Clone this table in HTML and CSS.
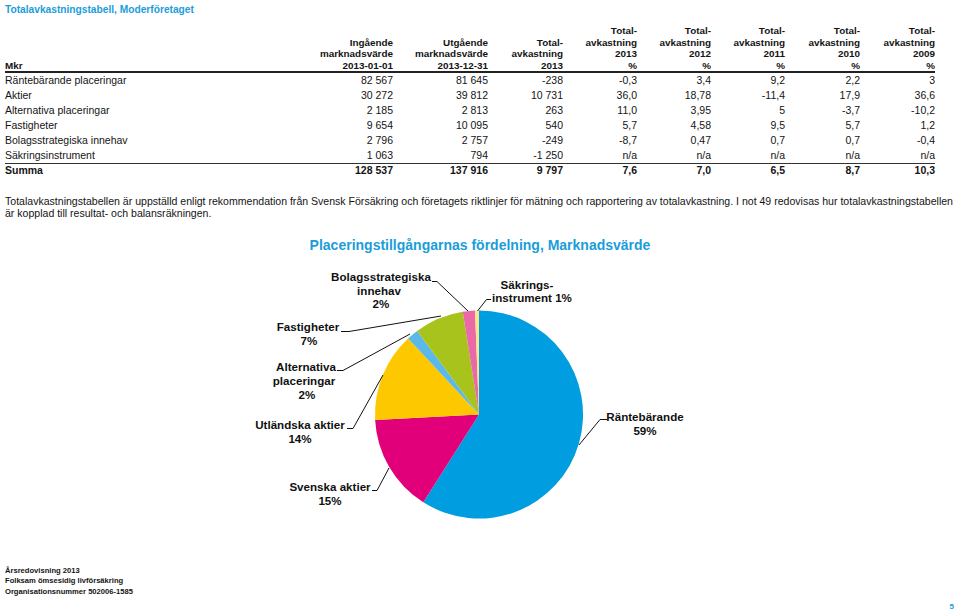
FILE: index.html
```html
<!DOCTYPE html>
<html lang="sv">
<head>
<meta charset="utf-8">
<title>Totalavkastningstabell, Moderföretaget</title>
<link rel="stylesheet" href="styles.css">
</head>
<body>
<div class="page">
  <h1 class="title">Totalavkastningstabell, Moderföretaget</h1>
  <table class="ret">
    <colgroup>
      <col class="c-lbl"><col class="c-in"><col class="c-ut"><col class="c-tot">
      <col class="c-pct"><col class="c-pct"><col class="c-pct"><col class="c-pct2"><col class="c-pct2">
    </colgroup>
    <thead>
      <tr>
        <th class="lbl">Mkr</th>
        <th>Ingående<br>marknadsvärde<br>2013-01-01</th>
        <th>Utgående<br>marknadsvärde<br>2013-12-31</th>
        <th>Total-<br>avkastning<br>2013</th>
        <th>Total-<br>avkastning<br>2013<br>%</th>
        <th>Total-<br>avkastning<br>2012<br>%</th>
        <th>Total-<br>avkastning<br>2011<br>%</th>
        <th>Total-<br>avkastning<br>2010<br>%</th>
        <th>Total-<br>avkastning<br>2009<br>%</th>
      </tr>
    </thead>
    <tbody>
      <tr><td class="lbl">Räntebärande placeringar</td><td>82 567</td><td>81 645</td><td>-238</td><td>-0,3</td><td>3,4</td><td>9,2</td><td>2,2</td><td>3</td></tr>
      <tr><td class="lbl">Aktier</td><td>30 272</td><td>39 812</td><td>10 731</td><td>36,0</td><td>18,78</td><td>-11,4</td><td>17,9</td><td>36,6</td></tr>
      <tr><td class="lbl">Alternativa placeringar</td><td>2 185</td><td>2 813</td><td>263</td><td>11,0</td><td>3,95</td><td>5</td><td>-3,7</td><td>-10,2</td></tr>
      <tr><td class="lbl">Fastigheter</td><td>9 654</td><td>10 095</td><td>540</td><td>5,7</td><td>4,58</td><td>9,5</td><td>5,7</td><td>1,2</td></tr>
      <tr><td class="lbl">Bolagsstrategiska innehav</td><td>2 796</td><td>2 757</td><td>-249</td><td>-8,7</td><td>0,47</td><td>0,7</td><td>0,7</td><td>-0,4</td></tr>
      <tr><td class="lbl">Säkringsinstrument</td><td>1 063</td><td>794</td><td>-1 250</td><td>n/a</td><td>n/a</td><td>n/a</td><td>n/a</td><td>n/a</td></tr>
    </tbody>
    <tfoot>
      <tr><td class="lbl">Summa</td><td>128 537</td><td>137 916</td><td>9 797</td><td>7,6</td><td>7,0</td><td>6,5</td><td>8,7</td><td>10,3</td></tr>
    </tfoot>
  </table>

  <p class="note">Totalavkastningstabellen är uppställd enligt rekommendation från Svensk Försäkring och företagets riktlinjer för mätning och rapportering av totalavkastning. I not 49 redovisas hur totalavkastningstabellen<br>är kopplad till resultat- och balansräkningen.</p>

  <h2 class="chart-title">Placeringstillgångarnas fördelning, Marknadsvärde</h2>

  <svg class="pie" width="950" height="290" viewBox="5 253 950 290" xmlns="http://www.w3.org/2000/svg">
    <g class="slices">
      <path fill="#009ee0" d="M479 414.5 L479 310.5 A104 104 0 1 1 423.3 502.3 Z"/>
      <path fill="#e2007a" d="M479 414.5 L423.3 502.3 A104 104 0 0 1 375.14 419.94 Z"/>
      <path fill="#fec800" d="M479 414.5 L375.14 419.94 A104 104 0 0 1 408.07 338.44 Z"/>
      <path fill="#5cb8e6" d="M479 414.5 L408.07 338.44 A104 104 0 0 1 417.14 330.9 Z"/>
      <path fill="#a8c31c" d="M479 414.5 L417.14 330.9 A104 104 0 0 1 462.73 311.78 Z"/>
      <path fill="#ea6aa7" d="M479 414.5 L462.73 311.78 A104 104 0 0 1 475.01 310.58 Z"/>
      <path fill="#fde58a" d="M479 414.5 L475.01 310.58 A104 104 0 0 1 479 310.5 Z"/>
    </g>
    <g class="leaders" fill="none" stroke="#111" stroke-width="1">
      <polyline points="432,281.5 437,281.5 468,311"/>
      <polyline points="491,299.5 486.5,299.5 477.5,311"/>
      <polyline points="341,331.5 349,331.5 441,316"/>
      <polyline points="337,370.5 343,370.5 410,334"/>
      <polyline points="347,428.5 353,428.5 383,375"/>
      <polyline points="372,490.5 377,490.5 389,468"/>
      <polyline points="607,419.5 600,419.5 579,445"/>
    </g>
    <g class="labels">
      <text x="381" y="281">Bolagsstrategiska</text>
      <text x="379" y="294.5">innehav</text>
      <text x="381" y="308">2%</text>
      <text x="527" y="289">Säkrings-</text>
      <text x="532" y="302">instrument 1%</text>
      <text x="308" y="331">Fastigheter</text>
      <text x="309" y="345">7%</text>
      <text x="306" y="371">Alternativa</text>
      <text x="304" y="385">placeringar</text>
      <text x="307" y="399">2%</text>
      <text x="300" y="429">Utländska aktier</text>
      <text x="300" y="443">14%</text>
      <text x="330" y="491">Svenska aktier</text>
      <text x="330" y="505">15%</text>
      <text x="645" y="420.5">Räntebärande</text>
      <text x="645" y="434.5">59%</text>
    </g>
  </svg>

  <footer class="foot">
    <div>Årsredovisning 2013</div>
    <div>Folksam ömsesidig livförsäkring</div>
    <div>Organisationsnummer 502006-1585</div>
  </footer>
  <div class="pageno">5</div>
</div>
</body>
</html>
```

FILE: styles.css
```css
html, body {
  margin: 0;
  padding: 0;
  background: #ffffff;
}

body {
  font-family: "Liberation Sans", Arial, sans-serif;
  color: #141414;
}

.page {
  width: 960px;
  height: 616px;
  box-sizing: border-box;
  padding: 0 5px 4px 5px;
  display: flex;
  flex-direction: column;
  overflow: hidden;
}

.title {
  margin: 4px 0 0 0;
  font-size: 10.2px;
  line-height: 12px;
  font-weight: bold;
  color: #1b9dd9;
}

.ret {
  margin-top: 9px;
  width: 930px;
  border-collapse: collapse;
  table-layout: fixed;
}

.c-lbl { width: 295px; }
.c-in { width: 93px; }
.c-ut { width: 95px; }
.c-tot { width: 75px; }
.c-pct { width: 74px; }
.c-pct2 { width: 75px; }

.ret th {
  font-size: 9.9px;
  line-height: 11.5px;
  font-weight: bold;
  text-align: right;
  vertical-align: bottom;
  padding: 0;
  border-bottom: 2px solid #222;
  white-space: nowrap;
}

.ret td {
  font-size: 10.5px;
  line-height: 15px;
  padding: 0;
  text-align: right;
  white-space: nowrap;
}

.ret th.lbl,
.ret td.lbl {
  text-align: left;
}

.ret tfoot td {
  border-top: 1px solid #333;
  line-height: 13px;
  padding-top: 0;
  font-weight: bold;
}

.note {
  margin: 18px 0 0 0;
  font-size: 10.55px;
  line-height: 12px;
  white-space: nowrap;
}

.chart-title {
  margin: 18px 0 0 0;
  font-size: 14px;
  line-height: 16px;
  font-weight: bold;
  text-align: center;
  color: #1b9dd9;
}

.pie {
  display: block;
}

.pie .labels text {
  font-family: "Liberation Sans", Arial, sans-serif;
  font-size: 11.6px;
  font-weight: bold;
  fill: #111;
  text-anchor: middle;
}

.foot {
  margin-top: auto;
  font-size: 7.6px;
  line-height: 10.5px;
  font-weight: bold;
}

.pageno {
  margin-top: 5px;
  font-size: 8px;
  line-height: 10px;
  font-weight: bold;
  color: #1b9dd9;
  text-align: right;
  padding-right: 1px;
}
```
